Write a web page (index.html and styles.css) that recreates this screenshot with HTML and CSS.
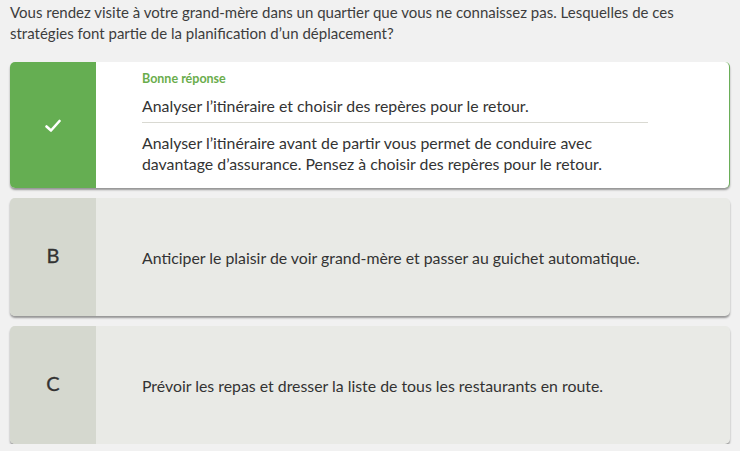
FILE: index.html
```html
<!DOCTYPE html>
<html lang="fr">
<head>
<meta charset="utf-8">
<title>Quiz</title>
<link rel="stylesheet" href="styles.css">
</head>
<body>
<div class="page">
  <p class="question">Vous rendez visite à votre grand-mère dans un quartier que vous ne connaissez pas. Lesquelles de ces stratégies font partie de la planification d’un déplacement?</p>
  <div class="choices">
    <div class="choice correct">
      <div class="marker">
        <svg class="check" width="16" height="14" viewBox="0 0 16 14"><path d="M1.5 7.5 L6 11.5 L14.5 2" fill="none" stroke="#fff" stroke-width="2.6" stroke-linecap="round" stroke-linejoin="round"/></svg>
      </div>
      <div class="body">
        <div class="label">Bonne réponse</div>
        <div class="answer">Analyser l’itinéraire et choisir des repères pour le retour.</div>
        <div class="feedback">Analyser l’itinéraire avant de partir vous permet de conduire avec davantage d’assurance. Pensez à choisir des repères pour le retour.</div>
      </div>
    </div>
    <div class="choice">
      <div class="marker"><span class="letter">B</span></div>
      <div class="body centered">
        <div class="answer">Anticiper le plaisir de voir grand-mère et passer au guichet automatique.</div>
      </div>
    </div>
    <div class="choice">
      <div class="marker"><span class="letter">C</span></div>
      <div class="body centered">
        <div class="answer">Prévoir les repas et dresser la liste de tous les restaurants en route.</div>
      </div>
    </div>
  </div>
</div>
</body>
</html>
```

FILE: styles.css
```css
* { box-sizing: border-box; }
html, body { margin: 0; padding: 0; }
body {
  background: #f1f1f1;
  font-family: Lato, "Open Sans", sans-serif;
  color: #333;
}
.page { padding: 2px 10px 0 10px; }
.question {
  margin: 0;
  font-size: 15px;
  line-height: 21px;
  color: #3d3d3d;
}
.choices {
  margin-top: 18px;
  display: flex;
  flex-direction: column;
  gap: 10px;
}
.choice {
  display: flex;
  border-radius: 5px;
  overflow: hidden;
  background: #e9eae6;
  box-shadow: 0 2px 2px rgba(0,0,0,0.38);
  min-height: 118px;
}
.choice.correct {
  background: #fff;
  border-right: 1.5px solid #6aae58;
}
.marker {
  width: 86px;
  flex: 0 0 86px;
  background: #d5d8cf;
  display: flex;
  align-items: center;
  justify-content: center;
}
.correct .marker { background: #65ae52; }
.check { display: block; margin-top: 1px; }
.letter {
  font-size: 20px;
  color: #333;
  line-height: 1;
  padding-bottom: 4px;
  -webkit-text-stroke: 0.3px #333;
}
.body {
  flex: 1;
  padding: 9px 81px 14px 46px;
  font-size: 15.85px;
  line-height: 21px;
}
.body.centered {
  display: flex;
  align-items: center;
  padding-top: 0;
  padding-bottom: 0;
}
.label {
  font-size: 12.5px;
  font-weight: bold;
  line-height: 16px;
  color: #6aad4c;
}
.answer { color: #333; }
.correct .answer {
  margin-top: 8px;
  padding-bottom: 6px;
  border-bottom: 1px solid #d9d9d2;
}
.feedback {
  margin-top: 9px;
  color: #333;
}
```
